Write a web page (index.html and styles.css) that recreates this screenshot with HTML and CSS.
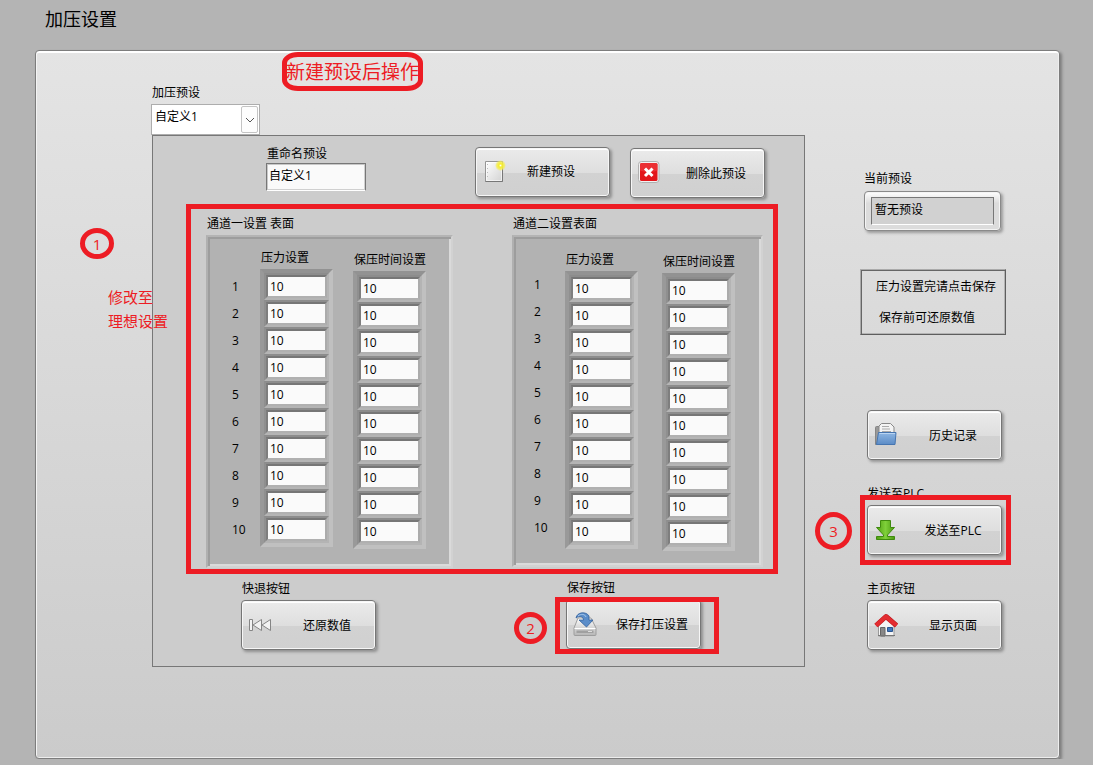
FILE: index.html
```html
<!DOCTYPE html>
<html lang="zh-CN">
<head>
<meta charset="utf-8">
<title>加压设置</title>
<link rel="stylesheet" href="styles.css">
</head>
<body>
<header class="page-header"><h1 class="page-title">加压设置</h1></header>
<main class="panel">
  <div class="workspace">
    <label class="label" for="preset">加压预设</label>
    <div class="select-wrap">
      <select class="select" id="preset"><option>自定义1</option></select>
      <span class="select-arrow"><svg width="10" height="6" viewBox="0 0 10 6"><path d="M1 1l4 4 4-4" fill="none" stroke="#555"/></svg></span>
    </div>
    <section class="frame">
      <div class="toolbar">
        <div class="rename">
          <label class="label" for="rename">重命名预设</label>
          <input class="text-input" id="rename" value="自定义1">
        </div>
        <div class="toolbar-buttons">
          <button class="btn btn-new" type="button">
            <svg class="icon" viewBox="0 0 24 24"><defs><linearGradient id="pg" x2="1" y2="1"><stop stop-color="#fff"/><stop offset="1" stop-color="#d2d2d2"/></linearGradient><radialGradient id="gl"><stop stop-color="#fff"/><stop offset=".3" stop-color="#f7ee2a"/><stop offset=".7" stop-color="#f5ee50" stop-opacity=".8"/><stop offset="1" stop-color="#f5ee50" stop-opacity="0"/></radialGradient></defs><path d="M3.500 1.500h17v20h-17z" fill="url(#pg)" stroke="#959595"/><path d="M3.500 21.500h17v-19" fill="none" stroke="#777"/><path d="M4.500 2.500h15v18h-15z" fill="none" stroke="#fff" stroke-opacity=".6"/><path d="M5.500 4v15" stroke="#bbb" stroke-dasharray="1 3"/><circle cx="18.500" cy="5.500" r="5.500" fill="url(#gl)"/></svg>
            <span class="btn-text">新建预设</span>
          </button>
          <button class="btn btn-delete" type="button">
            <svg class="icon" viewBox="0 0 24 24"><rect x="1.500" y=".5" width="20.500" height="21" rx="3" fill="#f2f2f2" stroke="#b0b0b0"/><rect x="3" y="2" width="17.500" height="18" rx="1.500" fill="#e3161b"/><path d="M3 3.500q0-1.500 1.500-1.500H19q1.500 0 1.500 1.500v6q-8 3-17.500 0z" fill="#ee3b3d" fill-opacity=".7"/><path d="M8 7.500l7.500 7.500M15.500 7.500L8 15" stroke="#fff" stroke-width="3"/></svg>
            <span class="btn-text">删除此预设</span>
          </button>
        </div>
      </div>

      <div class="channels">
        <section class="channel channel-one">
          <h2 class="label">通道一设置 表面</h2>
          <div class="well">
            <ol class="numbers"><li>1</li><li>2</li><li>3</li><li>4</li><li>5</li><li>6</li><li>7</li><li>8</li><li>9</li><li>10</li></ol>
            <div class="column">
              <h3 class="label column-title">压力设置</h3>
              <div class="cells">
                <div class="cell"><input class="cell-input" aria-label="通道一压力 1" value="10"></div>
                <div class="cell"><input class="cell-input" aria-label="通道一压力 2" value="10"></div>
                <div class="cell"><input class="cell-input" aria-label="通道一压力 3" value="10"></div>
                <div class="cell"><input class="cell-input" aria-label="通道一压力 4" value="10"></div>
                <div class="cell"><input class="cell-input" aria-label="通道一压力 5" value="10"></div>
                <div class="cell"><input class="cell-input" aria-label="通道一压力 6" value="10"></div>
                <div class="cell"><input class="cell-input" aria-label="通道一压力 7" value="10"></div>
                <div class="cell"><input class="cell-input" aria-label="通道一压力 8" value="10"></div>
                <div class="cell"><input class="cell-input" aria-label="通道一压力 9" value="10"></div>
                <div class="cell"><input class="cell-input" aria-label="通道一压力 10" value="10"></div>
              </div>
            </div>
            <div class="column column-time">
              <h3 class="label column-title">保压时间设置</h3>
              <div class="cells">
                <div class="cell"><input class="cell-input" aria-label="通道一保压时间 1" value="10"></div>
                <div class="cell"><input class="cell-input" aria-label="通道一保压时间 2" value="10"></div>
                <div class="cell"><input class="cell-input" aria-label="通道一保压时间 3" value="10"></div>
                <div class="cell"><input class="cell-input" aria-label="通道一保压时间 4" value="10"></div>
                <div class="cell"><input class="cell-input" aria-label="通道一保压时间 5" value="10"></div>
                <div class="cell"><input class="cell-input" aria-label="通道一保压时间 6" value="10"></div>
                <div class="cell"><input class="cell-input" aria-label="通道一保压时间 7" value="10"></div>
                <div class="cell"><input class="cell-input" aria-label="通道一保压时间 8" value="10"></div>
                <div class="cell"><input class="cell-input" aria-label="通道一保压时间 9" value="10"></div>
                <div class="cell"><input class="cell-input" aria-label="通道一保压时间 10" value="10"></div>
              </div>
            </div>
          </div>
        </section>
        <section class="channel channel-two">
          <h2 class="label">通道二设置表面</h2>
          <div class="well">
            <ol class="numbers"><li>1</li><li>2</li><li>3</li><li>4</li><li>5</li><li>6</li><li>7</li><li>8</li><li>9</li><li>10</li></ol>
            <div class="column">
              <h3 class="label column-title">压力设置</h3>
              <div class="cells">
                <div class="cell"><input class="cell-input" aria-label="通道二压力 1" value="10"></div>
                <div class="cell"><input class="cell-input" aria-label="通道二压力 2" value="10"></div>
                <div class="cell"><input class="cell-input" aria-label="通道二压力 3" value="10"></div>
                <div class="cell"><input class="cell-input" aria-label="通道二压力 4" value="10"></div>
                <div class="cell"><input class="cell-input" aria-label="通道二压力 5" value="10"></div>
                <div class="cell"><input class="cell-input" aria-label="通道二压力 6" value="10"></div>
                <div class="cell"><input class="cell-input" aria-label="通道二压力 7" value="10"></div>
                <div class="cell"><input class="cell-input" aria-label="通道二压力 8" value="10"></div>
                <div class="cell"><input class="cell-input" aria-label="通道二压力 9" value="10"></div>
                <div class="cell"><input class="cell-input" aria-label="通道二压力 10" value="10"></div>
              </div>
            </div>
            <div class="column column-time">
              <h3 class="label column-title">保压时间设置</h3>
              <div class="cells">
                <div class="cell"><input class="cell-input" aria-label="通道二保压时间 1" value="10"></div>
                <div class="cell"><input class="cell-input" aria-label="通道二保压时间 2" value="10"></div>
                <div class="cell"><input class="cell-input" aria-label="通道二保压时间 3" value="10"></div>
                <div class="cell"><input class="cell-input" aria-label="通道二保压时间 4" value="10"></div>
                <div class="cell"><input class="cell-input" aria-label="通道二保压时间 5" value="10"></div>
                <div class="cell"><input class="cell-input" aria-label="通道二保压时间 6" value="10"></div>
                <div class="cell"><input class="cell-input" aria-label="通道二保压时间 7" value="10"></div>
                <div class="cell"><input class="cell-input" aria-label="通道二保压时间 8" value="10"></div>
                <div class="cell"><input class="cell-input" aria-label="通道二保压时间 9" value="10"></div>
                <div class="cell"><input class="cell-input" aria-label="通道二保压时间 10" value="10"></div>
              </div>
            </div>
          </div>
        </section>
      </div>

      <div class="actions">
        <div class="action action-restore">
          <label class="label" for="restore">快退按钮</label>
          <button class="btn" id="restore" type="button">
            <svg class="icon" viewBox="0 0 24 24"><g fill="#f2f2f2" stroke="#858585" stroke-linejoin="round"><path d="M1.500 6.500h3v11h-3zM13.500 6.500v11L5 12zM22.500 6.500v11L14 12z"/></g></svg>
            <span class="btn-text">还原数值</span>
          </button>
        </div>
        <div class="action">
          <label class="label" for="save">保存按钮</label>
          <div class="marked">
            <button class="btn" id="save" type="button">
              <svg class="icon" viewBox="0 0 24 24"><defs><linearGradient id="dk" x2="0" y2="1"><stop stop-color="#fff"/><stop offset="1" stop-color="#b5b5b5"/></linearGradient></defs><path d="M5 6h13l5 10v6.500q0 1-1 1H2q-1 0-1-1V16z" fill="url(#dk)" stroke="#9d9d9d"/><path d="M1.500 16.500h21" stroke="#fff"/><path d="M3.500 18.500h17v2.500h-17z" fill="#a0a0a0"/><path d="M15 19.500h4" stroke="#ddd"/><path d="M3 6C4 0 13-1 16 4v4h4l-6.500 7L6 8h4.500C10.500 5 7 3 3 6z" fill="#5b8dc9" stroke="#315f9c" stroke-width=".8"/><path d="M5 4c3-2.500 7-2 8 1" fill="none" stroke="#a9c9ec"/></svg>
              <span class="btn-text">保存打压设置</span>
            </button>
            <span class="mark-box mark-save"></span>
            <span class="mark-circle mark-two">2</span>
          </div>
        </div>
      </div>
    </section>
  </div>

  <aside class="side">
    <label class="label side-indent-small" for="current">当前预设</label>
    <div class="readout"><input class="readout-input" id="current" value="暂无预设" readonly></div>
    <div class="note"><p class="note-line">压力设置完请点击保存</p><p class="note-line note-line-second">保存前可还原数值</p></div>
    <button class="btn btn-history" type="button">
      <svg class="icon" viewBox="0 0 24 24"><defs><linearGradient id="fd" x2="0" y2="1"><stop stop-color="#8fb7e3"/><stop offset="1" stop-color="#5b8bc6"/></linearGradient></defs><path d="M1.500 4.500q0-1 1-1h4v18h-5z" fill="#999" stroke="#858585"/><path d="M7.500.5h9L20 4v8H5V3z" fill="#f3f3f3" stroke="#888"/><path d="M8 3.500h7M8 6h8M8 8.500h9" stroke="#aaa"/><path d="M4.500 9.500h17.500l-1 12H2.500z" fill="url(#fd)" stroke="#4675b0"/><path d="M5.500 10.500h15.500" stroke="#b9d4f1"/></svg>
      <span class="btn-text">历史记录</span>
    </button>
    <label class="label side-label label-send" for="send">发送至PLC</label>
    <div class="marked side-button">
      <button class="btn" id="send" type="button">
        <svg class="icon" viewBox="0 0 24 24"><defs><linearGradient id="gr" x2="1" y2="0"><stop stop-color="#4f9f12"/><stop offset=".5" stop-color="#7fd03a"/><stop offset="1" stop-color="#4a9a10"/></linearGradient></defs><g fill="url(#gr)" stroke="#3f8a0e"><path d="M6.500 2.500h10v7h4l-7 7.500v1.500h7v3h-18v-3h7V17l-7-7.500h4z"/></g></svg>
        <span class="btn-text">发送至PLC</span>
      </button>
      <span class="mark-box mark-send"></span>
      <span class="mark-circle mark-three">3</span>
    </div>
    <label class="label side-label label-home" for="home">主页按钮</label>
    <button class="btn side-button" id="home" type="button">
      <svg class="icon" viewBox="0 0 24 24"><path d="M4.500 12L12 5l8 7v11h-15.500z" fill="#f4f4f4" stroke="#999"/><path d="M6.500 14.500h4.500V23H6.500z" fill="#888" stroke="#666"/><path d="M13.500 14.500h5v4h-5z" fill="#3f78bd" stroke="#2a5590"/><path d="M2 12.500L12 3.500l10.500 9" fill="none" stroke="#b8181d" stroke-width="5" stroke-linejoin="round"/><path d="M2 12.500L12 3.500l10.500 9" fill="none" stroke="#e32d31" stroke-width="4" stroke-linejoin="round"/><path d="M4 22.500h17" stroke="#777"/></svg>
      <span class="btn-text">显示页面</span>
    </button>
  </aside>

  <span class="mark-title">新建预设后操作</span>
  <span class="mark-circle mark-one">1</span>
  <p class="mark-text">修改至<br>理想设置</p>
</main>
</body>
</html>
```
FILE: styles.css
```css
* { box-sizing: border-box; }

body {
  margin: 0;
  background: #b4b4b4;
  color: #000;
  font: 12px/16px "Open Sans", "Noto Sans CJK SC", sans-serif;
}

h1, h2, h3, p, ol { margin: 0; padding: 0; font-weight: 400; }

input, select, button { font: inherit; color: inherit; margin: 0; border-radius: 0; }

.page-header { padding: 7px 45px 19px; }
.page-title { font-size: 18px; line-height: 24px; }

.label { display: block; padding: 1px 0 0 1px; font-size: 12px; line-height: 16px; white-space: nowrap; }

.panel {
  position: relative;
  display: flex;
  gap: 55px;
  margin: 0 33px 0 35px;
  padding: 33px 53px 91px 115px;
  border: 1px solid #7d7d7d;
  border-radius: 4px;
  background: linear-gradient(#e4e4e4, #cbcbcb);
  box-shadow: inset 0 2px 0 #fff, inset 1px 0 0 #f4f4f4, inset -1px -1px 0 #eee, 2px 2px 3px rgba(0, 0, 0, .3);
}

.workspace { flex: 1; }

.select-wrap { position: relative; width: 109px; margin-top: 3px; }
.select {
  display: block;
  width: 100%;
  height: 31px;
  padding: 0 24px 6px 3px;
  border: 1px solid #adadad;
  background: #fff;
  appearance: none;
}
.select-arrow {
  position: absolute;
  top: 2px;
  right: 2px;
  bottom: 2px;
  width: 17px;
  display: flex;
  align-items: center;
  justify-content: center;
  border: 1px solid #c4c4c4;
  border-radius: 2px;
  background: #fdfdfd;
  pointer-events: none;
}

.frame { margin-left: 1px; border: 1px solid #777; background: #ccc; }

.toolbar { display: flex; align-items: flex-start; gap: 109px; padding: 9px 0 6px 113px; }
.rename { width: 100px; }
.text-input {
  display: block;
  width: 100%;
  height: 28px;
  margin-top: 1px;
  padding: 0 2px 4px;
  border: 1px solid;
  border-color: #777 #777 #fff #777;
  box-shadow: inset 1px 1px 0 #c8c8c8, inset -1px -1px 0 #d0d0d0;
  background: #fafafa;
}
.toolbar-buttons { display: flex; align-items: flex-start; gap: 20px; }

.btn {
  display: flex;
  align-items: center;
  gap: 7px;
  width: 135px;
  height: 50px;
  padding: 0 0 0 6px;
  border: 1px solid #767676;
  border-radius: 4px;
  background: linear-gradient(#ebebeb, #dedede 52%, #d2d2d2 52%, #d0d0d0);
  box-shadow: inset 0 0 0 1px #f6f6f6, inset 0 2px 0 #fff, 2px 2px 3px rgba(0, 0, 0, .3);
}
.icon { flex: none; width: 24px; height: 24px; }
.btn-text { flex: 1; padding-top: 1px; text-align: center; white-space: nowrap; }
.btn-new { margin-top: 2px; }
.btn-new .btn-text { padding: 0 20px 0 0; }
.btn-delete { margin-top: 3px; }

.channels {
  display: flex;
  align-items: flex-start;
  justify-content: space-between;
  margin: 0 26px 0 33px;
  padding: 6px 10px 1px 15px;
  border: 5px solid #ed1c24;
}
.channel-one { width: 247px; }
.channel-two { width: 251px; }
.well {
  display: flex;
  align-items: flex-start;
  margin-top: 3px;
  border: 2px solid;
  border-color: #b4b4b4 #d2d2d2 #d2d2d2 #b0b0b0;
  background: #b2b2b2;
  box-shadow: inset 2px 2px 0 #9d9d9d, inset -2px -2px 0 #dadada;
}
.channel-one .well { padding: 12px 0 17px 24px; }
.channel-two .well { padding: 14px 0 14px 20px; }
.numbers { list-style: none; line-height: 27px; }
.channel-one .numbers { width: 28px; margin-top: 24px; }
.channel-two .numbers { width: 31px; margin-top: 20px; }
.column { width: 73px; }
.column-time { margin-top: 2px; }
.channel-one .column-time { margin-left: 20px; }
.channel-two .column-time { margin-left: 24px; }
.cells {
  margin-top: 3px;
  border: 4px solid;
  border-color: #929292 #c0c0c0 #c0c0c0 #999;
}
.cell { border: 2px solid; border-color: #8c8c8c #b4b4b4 #b4b4b4 #8f8f8f; }
.cell-input {
  display: block;
  width: 100%;
  height: 23px;
  padding: 0 2px;
  border: 2px solid;
  border-color: #767676 #ababab #b0b0b0 #7e7e7e;
  background: #fafafa;
}

.actions { display: flex; align-items: flex-start; gap: 190px; padding: 5px 0 16px 88px; }
.action { display: flex; flex-direction: column; gap: 3px; }
.action-restore { margin-top: 1px; }

.marked { position: relative; width: 135px; }

.side { width: 146px; padding-top: 86px; }
.side-indent-small { padding-left: 4px; }
.readout {
  width: 137px;
  height: 40px;
  margin: 4px 0 0 4px;
  padding: 5px 6px;
  border: 1px solid #8a8a8a;
  border-radius: 4px;
  background: linear-gradient(#fff, #dcdcdc 30%, #dcdcdc);
  box-shadow: inset 0 0 0 1px #f4f4f4, 2px 2px 3px rgba(0, 0, 0, .3);
}
.readout-input {
  display: block;
  width: 100%;
  height: 28px;
  padding: 0 3px 4px;
  border: 1px solid;
  border-color: #777 #777 #fff #777;
  background: #d1d1d1;
}
.note {
  margin-top: 38px;
  padding: 1px;
  border: 1px solid;
  border-color: #aaa #5e5e5e #5e5e5e #aaa;
  box-shadow: inset 1px 1px 0 #666, inset -1px -1px 0 #b4b4b4;
}
.note-line { line-height: 31px; padding-left: 14px; }
.note-line-second { padding-left: 17px; }
.btn-history { margin: 75px 0 0 7px; }
.side-label { padding-left: 7px; }
.label-send { margin-top: 25px; }
.label-home { margin-top: 25px; }
.side-button { margin: 3px 0 0 7px; }

/* Operator guide marks, drawn over the controls they point at. */
.mark-box { position: absolute; border: 5px solid #ed1c24; pointer-events: none; }
.mark-save { top: -2px; left: -11px; width: 164px; height: 57px; }
.mark-send { top: -10px; left: -7px; width: 151px; height: 70px; }
.mark-circle {
  position: absolute;
  display: flex;
  align-items: center;
  justify-content: center;
  border: 5px solid #ed1c24;
  border-radius: 50%;
  color: #ed1c24;
  font-size: 15px;
}
.mark-one { top: 177px; left: 44px; width: 34px; height: 31px; }
.mark-two { top: 13px; left: -52px; width: 33px; height: 32px; }
.mark-three { top: 7px; left: -52px; width: 37px; height: 38px; }
.mark-title {
  position: absolute;
  top: 1px;
  left: 246px;
  width: 141px;
  height: 39px;
  border: 5px solid #ed1c24;
  border-radius: 16px / 11px;
  color: #ed1c24;
  font-size: 19px;
  line-height: 31px;
  white-space: nowrap;
  display: flex;
  justify-content: center;
}
.mark-text {
  position: absolute;
  top: 234px;
  left: 72px;
  color: #ed1c24;
  font-size: 15px;
  line-height: 24px;
}
```
